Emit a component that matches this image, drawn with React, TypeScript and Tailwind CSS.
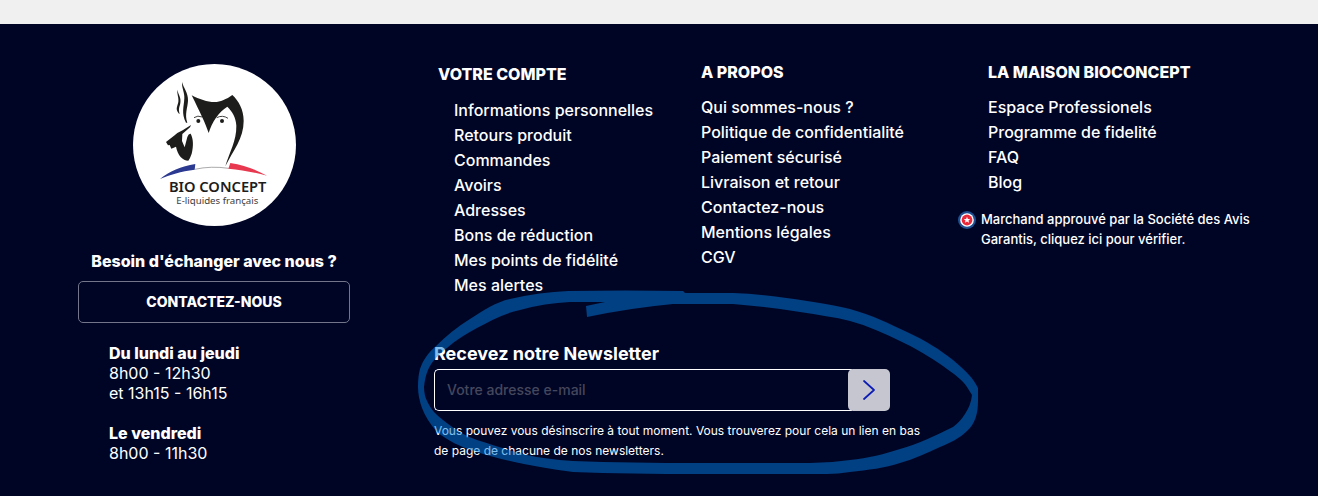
import React, { useState } from 'react';

const accountLinks = [
  'Informations personnelles',
  'Retours produit',
  'Commandes',
  'Avoirs',
  'Adresses',
  'Bons de réduction',
  'Mes points de fidélité',
  'Mes alertes',
];

const aboutLinks = [
  'Qui sommes-nous ?',
  'Politique de confidentialité',
  'Paiement sécurisé',
  'Livraison et retour',
  'Contactez-nous',
  'Mentions légales',
  'CGV',
];

const houseLinks = ['Espace Professionels', 'Programme de fidelité', 'FAQ', 'Blog'];

const LinkList: React.FC<{ links: string[] }> = ({ links }) => (
  <ul className="text-base leading-[25px] font-medium whitespace-nowrap">
    {links.map((label) => (
      <li key={label}>
        <a href="#" className="hover:underline">{label}</a>
      </li>
    ))}
  </ul>
);

const Logo: React.FC = () => (
  <svg viewBox="36 27 489 486" className="h-[162px] w-[163px]" role="img" aria-label="Bio Concept">
    <ellipse cx="280.5" cy="270" rx="244.5" ry="243" fill="#fff" />
    {/* Smoke */}
    <path d="M183 81C182 100 191 112 190 130C189 154 180 176 195 203H199C190 178 200 158 201 137C202 113 187 98 183 81Z" fill="#1d1d1b" />
    <path d="M169 104C168 119 174 128 172 141C169 156 162 162 174 176H176C171 161 176 156 178 144C181 127 172 119 169 104Z" fill="#1d1d1b" />
    {/* Head */}
    <path d="M212 121C244 138 281 148 306 136C317 131 325 127 334 120C353 138 368 164 368 198C368 251 337 285 313 334C325 292 347 257 346 212C345 187 333 168 319 155C293 171 273 201 263 234C253 204 237 172 212 121Z" fill="#1d1d1b" />
    {/* Eyes */}
    <path d="M219 188Q230 180 244 186M287 188Q305 179 321 190" fill="none" stroke="#1d1d1b" strokeWidth="2.5" />
    <circle cx="232" cy="198" r="6" fill="#1d1d1b" />
    <circle cx="303" cy="198" r="6" fill="#1d1d1b" />
    {/* Pipe */}
    <path d="M210 210L207 217L184 237L183 258L191 277L199 246Q203 235 209 236C217 251 218 273 212 296Q207 311 202 317C185 317 170 301 165 275L151 281L146 270L141 271L135 261L161 241L169 234L185 226Z" fill="#1d1d1b" />
    {/* Tricolour arc */}
    <path d="M117 372C145 350 180 333 223 327L221 344C180 349 147 359 117 372Z" fill="#2b3990" />
    <path d="M221 343Q270 332 323 340" fill="none" stroke="#555" strokeWidth="1.5" />
    <path d="M328 324C371 331 405 344 438 362C402 353 362 344 322 341Z" fill="#e8384f" />
    <text x="290" y="410" textAnchor="middle" fill="#1d1d1b" fontSize="44" fontWeight="600" fontFamily="Noto Sans, sans-serif">BIO CONCEPT</text>
    <text x="289" y="446" textAnchor="middle" fill="#3c3c3b" fontSize="29" fontFamily="Noto Sans, sans-serif">E-liquides français</text>
  </svg>
);

const Badge: React.FC = () => (
  <svg viewBox="0 0 18 18" className="h-[18px] w-[18px] shrink-0" aria-hidden="true">
    <circle cx="9" cy="9" r="9" fill="#1d4f91" />
    <circle cx="9" cy="9" r="6.8" fill="#fff" />
    <circle cx="9" cy="9" r="5.4" fill="#ea2a3a" />
    <path d="M9 5.8L9.9 7.9L12.2 8.1L10.5 9.6L11 11.8L9 10.6L7 11.8L7.5 9.6L5.8 8.1L8.1 7.9Z" fill="#fff" />
  </svg>
);

/* Hand-drawn marker loop around the newsletter form */
const MarkerLoop: React.FC = () => (
  <svg
    viewBox="410 284 580 200"
    className="pointer-events-none absolute -top-[58px] -left-6 h-[200px] w-[580px] max-w-none"
    aria-hidden="true"
  >
    <path
      fill="#007ce0"
      fillOpacity="0.5"
      fillRule="evenodd"
      d="M568 291Q625 290 683 291L685 293L733 293C758 294 783 297 807 301C825 304 839 306 850 309C872 315 890 324 907 332C927 341 940 350 953 360C966 371 974 379 978 388V401C978 414 975 424 967 431C960 438 950 443 940 447C927 453 914 459 900 463C885 468 868 470 850 472Q838 474 827 474H700Q630 474 573 472C540 468 505 461 477 452C460 447 447 440 437 432C430 424 425 416 422 408Q418 397 418 387Q418 376 420 369C423 360 428 353 435 347Q452 330 470 319C484 310 496 302 510 299Q540 292 568 291Z
      M605 302L586 306L587 317Q630 308 673 304H733Q770 307 800 312C818 315 835 317 850 321C868 326 884 333 900 341C915 348 930 357 943 366C954 374 963 380 967 387L972 395Q971 405 965 414Q960 422 953 427C935 436 918 444 900 449C885 454 868 458 850 460Q830 463 810 463H700Q630 463 573 461Q545 459 527 455C510 451 493 445 477 440C465 436 454 429 443 420C436 415 431 409 428 403Q424 396 424 387Q425 377 428 370C432 361 439 354 447 348C456 340 466 334 477 328C490 321 505 313 520 310Q545 303 570 302Z"
    />
  </svg>
);

const App: React.FC = () => {
  const [email, setEmail] = useState('');

  return (
    <div className="flex min-h-screen flex-col bg-[#f0f0f0] pt-6 font-['Inter',sans-serif]">
      <footer className="grid flex-1 grid-cols-[272px_1fr] gap-x-[84px] bg-[#000526] pt-10 pr-[59px] pb-8 pl-[78px] text-white">
        {/* Contact */}
        <div>
          <div className="flex justify-center">
            <Logo />
          </div>
          <p className="mt-[25px] text-center text-base leading-5 font-extrabold">Besoin d'échanger avec nous ?</p>
          <button className="mt-[10px] h-[42px] w-full rounded-[5px] border border-[#73758a] text-sm font-extrabold">
            CONTACTEZ-NOUS
          </button>
          <div className="mt-5 pl-[31px] text-base leading-5">
            <p className="font-extrabold">Du lundi au jeudi</p>
            <p>8h00 - 12h30</p>
            <p>et 13h15 - 16h15</p>
            <p className="mt-5 font-extrabold">Le vendredi</p>
            <p>8h00 - 11h30</p>
          </div>
        </div>

        <div>
          <div className="grid grid-cols-[267fr_257fr_301fr]">
            <nav className="pt-0.5 pl-1">
              <h3 className="mb-4 text-base leading-4 font-extrabold">VOTRE COMPTE</h3>
              <div className="pl-4">
                <LinkList links={accountLinks} />
              </div>
            </nav>
            <nav>
              <h3 className="mb-[15px] text-base leading-4 font-extrabold">A PROPOS</h3>
              <LinkList links={aboutLinks} />
            </nav>
            <div>
              <nav className="pl-[30px]">
                <h3 className="mb-[15px] text-base leading-4 font-extrabold">LA MAISON BIOCONCEPT</h3>
                <LinkList links={houseLinks} />
              </nav>
              <a href="#" className="mt-[14px] flex items-start gap-[5px] text-[13px] leading-5 font-medium">
                <span className="flex h-5 items-center pt-0.5">
                  <Badge />
                </span>
                <span>
                  Marchand approuvé par la Société des Avis
                  <br />
                  Garantis, cliquez ici pour vérifier.
                </span>
              </a>
            </div>
          </div>

          {/* Newsletter */}
          <form className="relative mt-11 max-w-[500px]" onSubmit={(e) => e.preventDefault()}>
            <label htmlFor="email" className="block text-lg leading-6 font-bold">Recevez notre Newsletter</label>
            <div className="mt-[3px] flex h-[42px] max-w-[456px]">
              <input
                id="email"
                type="email"
                value={email}
                onChange={(e) => setEmail(e.target.value)}
                placeholder="Votre adresse e-mail"
                className="min-w-0 flex-1 rounded-l-[5px] border border-r-0 border-white bg-transparent px-3 text-sm font-medium placeholder:text-[#45475c]"
              />
              <button aria-label="S'inscrire" className="-ml-1 flex w-[42px] items-center justify-center rounded-[5px] bg-[#c5c6d0]">
                <svg viewBox="0 0 12 20" className="h-5 w-3" fill="none" stroke="#0c1cb4" strokeWidth="1.7" strokeLinecap="round" strokeLinejoin="round">
                  <path d="M1 1L11 10L1 19" />
                </svg>
              </button>
            </div>
            <p className="mt-[10px] text-xs leading-5">
              Vous pouvez vous désinscrire à tout moment. Vous trouverez pour cela un lien en bas
              <br />
              de page de chacune de nos newsletters.
            </p>
            <MarkerLoop />
          </form>
        </div>
      </footer>
    </div>
  );
};

export default App;
